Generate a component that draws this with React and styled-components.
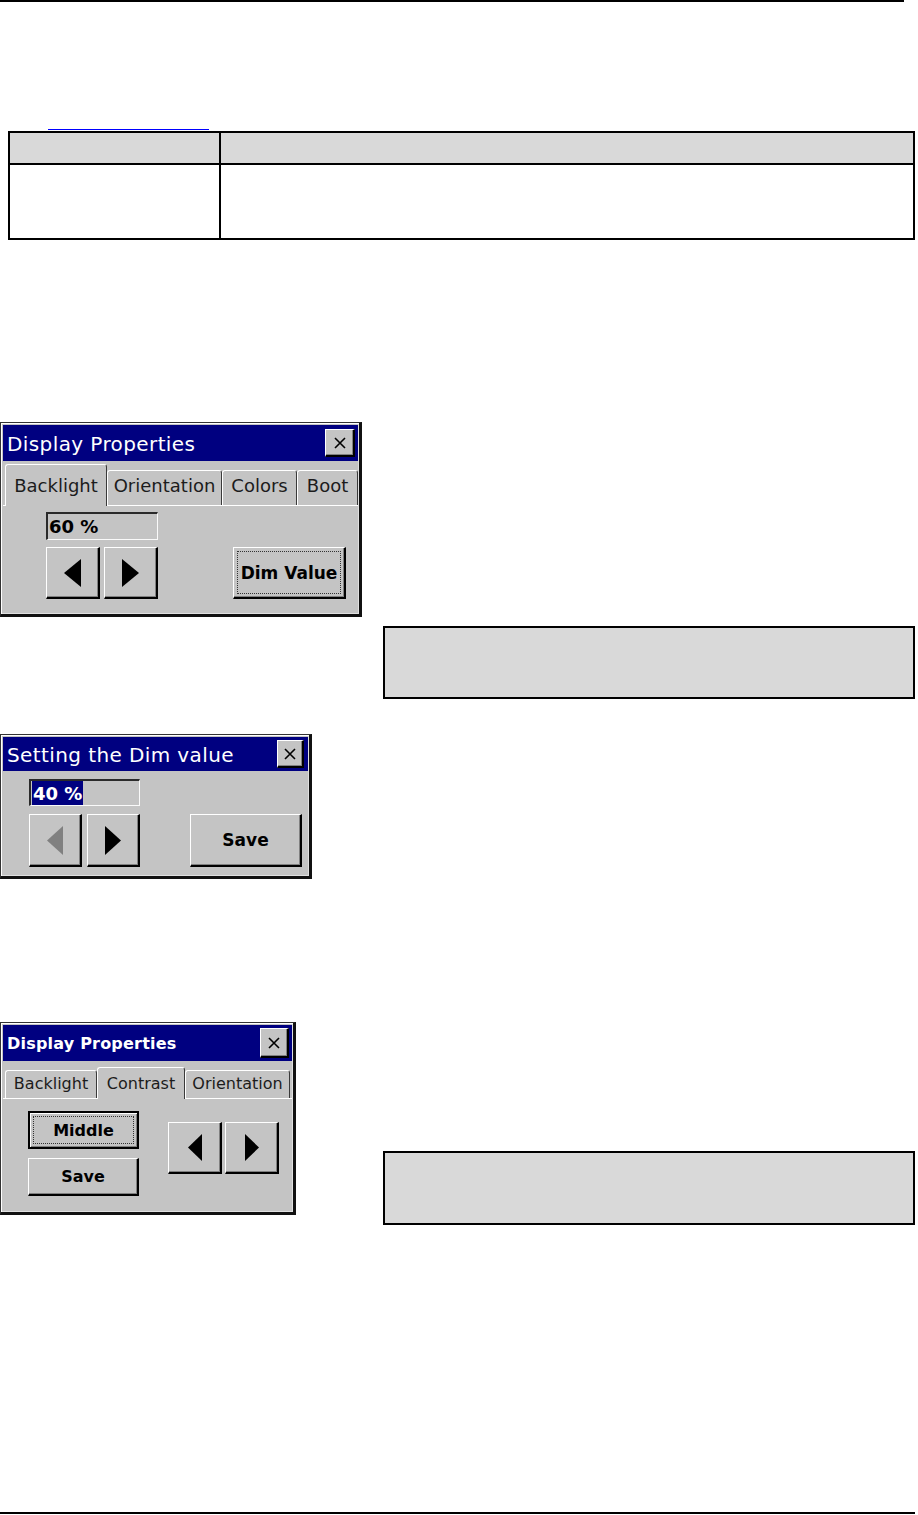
import React from 'react';
import styled, { createGlobalStyle, css } from 'styled-components';

const GlobalStyle = createGlobalStyle`
  html, body {
    margin: 0;
    padding: 0;
    background: #fff;
  }
  body {
    font-family: "DejaVu Sans", Verdana, sans-serif;
  }
`;

const Page = styled.div`
  width: 918px;
  height: 1515px;
  display: flex;
  flex-direction: column;
  align-items: flex-start;
  overflow: hidden;
`;

const Rule = styled.div`
  flex-shrink: 0;
  width: ${p => p.$w || 904}px;
  height: 2px;
  background: #000;
  margin-top: ${p => p.$top || 0}px;
`;

const LinkLine = styled.a`
  display: block;
  flex-shrink: 0;
  width: 161px;
  height: 1px;
  margin: 127px 0 0 48px;
  background: #0000ff;
`;

const Table = styled.div`
  flex-shrink: 0;
  box-sizing: border-box;
  width: 907px;
  margin: 1px 0 0 8px;
  border: 2px solid #000;
  display: grid;
  grid-template-columns: 211px 1fr;
`;

const Cell = styled.div`
  box-sizing: border-box;
  height: ${p => (p.$head ? 32 : 73)}px;
  background: ${p => (p.$head ? '#d9d9d9' : '#fff')};
  border-bottom: ${p => (p.$head ? '2px solid #000' : 'none')};
  border-right: ${p => (p.$first ? '2px solid #000' : 'none')};
`;

const Note = styled.div`
  flex-shrink: 0;
  box-sizing: border-box;
  width: 532px;
  height: ${p => p.$h}px;
  margin-top: ${p => p.$top}px;
  margin-left: ${p => p.$left}px;
  background: #d9d9d9;
  border: 2px solid #000;
`;

const Row = styled.div`
  display: flex;
  align-items: flex-start;
  margin-top: ${p => p.$top}px;
`;

/* ---- Windows CE dialog parts ---- */

const raised = css`
  box-sizing: border-box;
  border-style: solid;
  border-width: 1px 2px 2px 1px;
  border-color: #fff #000 #000 #fff;
  box-shadow: inset -1px -1px #808080;
  background: #c4c4c4;
`;

const Dialog = styled.div`
  flex-shrink: 0;
  box-sizing: border-box;
  width: ${p => p.$w}px;
  margin-top: ${p => p.$top || 0}px;
  background: #c4c4c4;
  border-style: solid;
  border-width: 1px 3px 3px 1px;
  border-color: #333 #111 #111 #333;
  box-shadow: inset 1px 1px #fff, inset -1px -1px #e0e0e0;
  padding: 2px 1px 0 2px;
  display: flex;
  flex-direction: column;
`;

const TitleBar = styled.div`
  height: ${p => p.$h}px;
  background: #000080;
  display: flex;
  align-items: center;
  justify-content: space-between;
  padding: 0 ${p => p.$pr}px 0 4px;
`;

const Title = styled.span`
  color: #fff;
  font-size: ${p => p.$size}px;
  font-weight: ${p => (p.$bold ? 700 : 400)};
  letter-spacing: ${p => p.$ls || 0}px;
  line-height: 1;
  white-space: nowrap;
  padding-top: 2px;
`;

const CloseButton = styled.div`
  ${raised};
  width: ${p => p.$w}px;
  height: ${p => p.$h}px;
  display: flex;
  align-items: center;
  justify-content: center;
`;

const TabStrip = styled.div`
  box-sizing: border-box;
  height: ${p => p.$h}px;
  display: flex;
  align-items: flex-end;
  padding-left: 2px;
  border-bottom: 1px solid #fff;
`;

const Tab = styled.div`
  box-sizing: border-box;
  width: ${p => p.$w}px;
  height: ${p => p.$h}px;
  margin-bottom: ${p => (p.$active ? -1 : 0)}px;
  background: #c4c4c4;
  border-style: solid;
  border-width: 1px 1px 0 1px;
  border-color: #fff #3a3a3a #fff #fff;
  border-radius: 3px 3px 0 0;
  display: flex;
  align-items: flex-end;
  justify-content: center;
  padding-bottom: ${p => p.$pb + (p.$active ? 1 : 0)}px;
  font-size: ${p => p.$size}px;
  line-height: ${p => p.$size}px;
  color: #1c1c1c;
  white-space: nowrap;
  overflow: hidden;
`;

const Panel = styled.div`
  display: grid;
  grid-template-columns: auto auto;
  justify-content: start;
  column-gap: ${p => p.$cgap}px;
  row-gap: ${p => p.$rgap}px;
  padding: ${p => p.$pad};
`;

const Field = styled.div`
  box-sizing: border-box;
  width: ${p => p.$w}px;
  height: ${p => p.$h}px;
  border-style: solid;
  border-width: 2px 1px 1px 2px;
  border-color: #2a2a2a #fafafa #fafafa #2a2a2a;
  background: #c4c4c4;
  display: flex;
  align-items: center;
  padding-left: 1px;
  font-size: 18px;
  font-weight: 700;
  color: #000;
`;

const Selection = styled.span`
  align-self: stretch;
  display: flex;
  align-items: center;
  padding: 0 1px;
  background: #000080;
  color: #fff;
`;

const ArrowPair = styled.div`
  display: flex;
  gap: ${p => p.$gap}px;
  margin-top: ${p => p.$top || 0}px;
  grid-column: ${p => p.$col || 'auto'};
  grid-row: ${p => p.$rows || 'auto'};
  align-self: start;
`;

const ArrowButton = styled.div`
  ${raised};
  width: ${p => p.$w}px;
  height: ${p => p.$h}px;
  display: flex;
  align-items: center;
  justify-content: center;
`;

const PushButton = styled.div`
  ${raised};
  width: ${p => p.$w}px;
  height: ${p => p.$h}px;
  display: flex;
  padding: ${p => (p.$focus ? 3 : 0)}px;
  font-size: ${p => p.$size || 17}px;
  font-weight: 700;
  color: #000;
  grid-column: ${p => p.$col || 'auto'};
  ${p =>
    p.$default &&
    css`
      border-width: 2px 2px 2px 2px;
      border-color: #000;
      box-shadow: inset 1px 1px #fff, inset -1px -1px #808080;
    `}
`;

const Label = styled.span`
  flex: 1;
  display: flex;
  align-items: center;
  justify-content: center;
  border: 1px ${p => (p.$focus ? 'dotted #333' : 'solid transparent')};
`;

const CloseIcon = () => (
  <svg width="12" height="12" viewBox="0 0 12 12">
    <path d="M1 1 L11 11 M11 1 L1 11" stroke="#000" strokeWidth="1.6" fill="none" />
  </svg>
);

const Triangle = ({ dir, w, h, color = '#000' }) => (
  <svg width={w} height={h} viewBox={`0 0 ${w} ${h}`}>
    <polygon
      points={dir === 'left' ? `${w},0 ${w},${h} 0,${h / 2}` : `0,0 0,${h} ${w},${h / 2}`}
      fill={color}
    />
  </svg>
);

const App = () => {
  return (
    <Page>
      <GlobalStyle />
      <Rule />
      <LinkLine href="#" />
      <Table>
        <Cell $head $first />
        <Cell $head />
        <Cell $first />
        <Cell />
      </Table>

      <Dialog $w={362} $top={182}>
        <TitleBar $h={36} $pr={3}>
          <Title $size={20} $ls={0.4}>Display Properties</Title>
          <CloseButton $w={30} $h={28}>
            <CloseIcon />
          </CloseButton>
        </TitleBar>
        <TabStrip $h={45}>
          <Tab $active $w={102} $h={42} $pb={10} $size={18}>Backlight</Tab>
          <Tab $w={115} $h={35} $pb={10} $size={18}>Orientation</Tab>
          <Tab $w={75} $h={35} $pb={10} $size={18}>Colors</Tab>
          <Tab $w={61} $h={35} $pb={10} $size={18}>Boot</Tab>
        </TabStrip>
        <Panel $cgap={75} $rgap={7} $pad="6px 0 15px 43px">
          <Field $w={112} $h={28}>60 %</Field>
          <div />
          <ArrowPair $gap={4}>
            <ArrowButton $w={54} $h={52}>
              <Triangle dir="left" w={17} h={28} />
            </ArrowButton>
            <ArrowButton $w={54} $h={52}>
              <Triangle dir="right" w={17} h={28} />
            </ArrowButton>
          </ArrowPair>
          <PushButton $w={113} $h={52} $focus>
            <Label $focus>Dim Value</Label>
          </PushButton>
        </Panel>
      </Dialog>

      <Note $top={9} $left={383} $h={73} />

      <Dialog $w={312} $top={35}>
        <TitleBar $h={34} $pr={4}>
          <Title $size={20} $ls={0.4}>Setting the Dim value</Title>
          <CloseButton $w={27} $h={28}>
            <CloseIcon />
          </CloseButton>
        </TitleBar>
        <Panel $cgap={50} $rgap={8} $pad="8px 0 9px 26px">
          <Field $w={111} $h={27}>
            <Selection>40 %</Selection>
          </Field>
          <div />
          <ArrowPair $gap={5}>
            <ArrowButton $w={53} $h={53}>
              <Triangle dir="left" w={16} h={29} color="#808080" />
            </ArrowButton>
            <ArrowButton $w={53} $h={53}>
              <Triangle dir="right" w={16} h={29} />
            </ArrowButton>
          </ArrowPair>
          <PushButton $w={112} $h={53}>
            <Label>Save</Label>
          </PushButton>
        </Panel>
      </Dialog>

      <Row $top={143}>
        <Dialog $w={296}>
          <TitleBar $h={36} $pr={3}>
            <Title $size={16} $bold $ls={0.2}>Display Properties</Title>
            <CloseButton $w={29} $h={30}>
              <CloseIcon />
            </CloseButton>
          </TitleBar>
          <TabStrip $h={38}>
            <Tab $w={92} $h={28} $pb={6} $size={16}>Backlight</Tab>
            <Tab $active $w={88} $h={32} $pb={6} $size={16}>Contrast</Tab>
            <Tab $w={105} $h={28} $pb={6} $size={16}>Orientation</Tab>
          </TabStrip>
          <Panel $cgap={29} $rgap={9} $pad="12px 0 16px 25px">
            <PushButton $w={111} $h={38} $size={16} $col="1" $default $focus>
              <Label $focus>Middle</Label>
            </PushButton>
            <ArrowPair $gap={3} $top={11} $col="2" $rows="1 / span 2">
              <ArrowButton $w={54} $h={52}>
                <Triangle dir="left" w={14} h={27} />
              </ArrowButton>
              <ArrowButton $w={54} $h={52}>
                <Triangle dir="right" w={14} h={27} />
              </ArrowButton>
            </ArrowPair>
            <PushButton $w={111} $h={38} $size={16} $col="1">
              <Label>Save</Label>
            </PushButton>
          </Panel>
        </Dialog>
        <Note $top={129} $left={87} $h={74} />
      </Row>

      <Rule $top={287} $w={915} />
    </Page>
  );
};

export default App;
